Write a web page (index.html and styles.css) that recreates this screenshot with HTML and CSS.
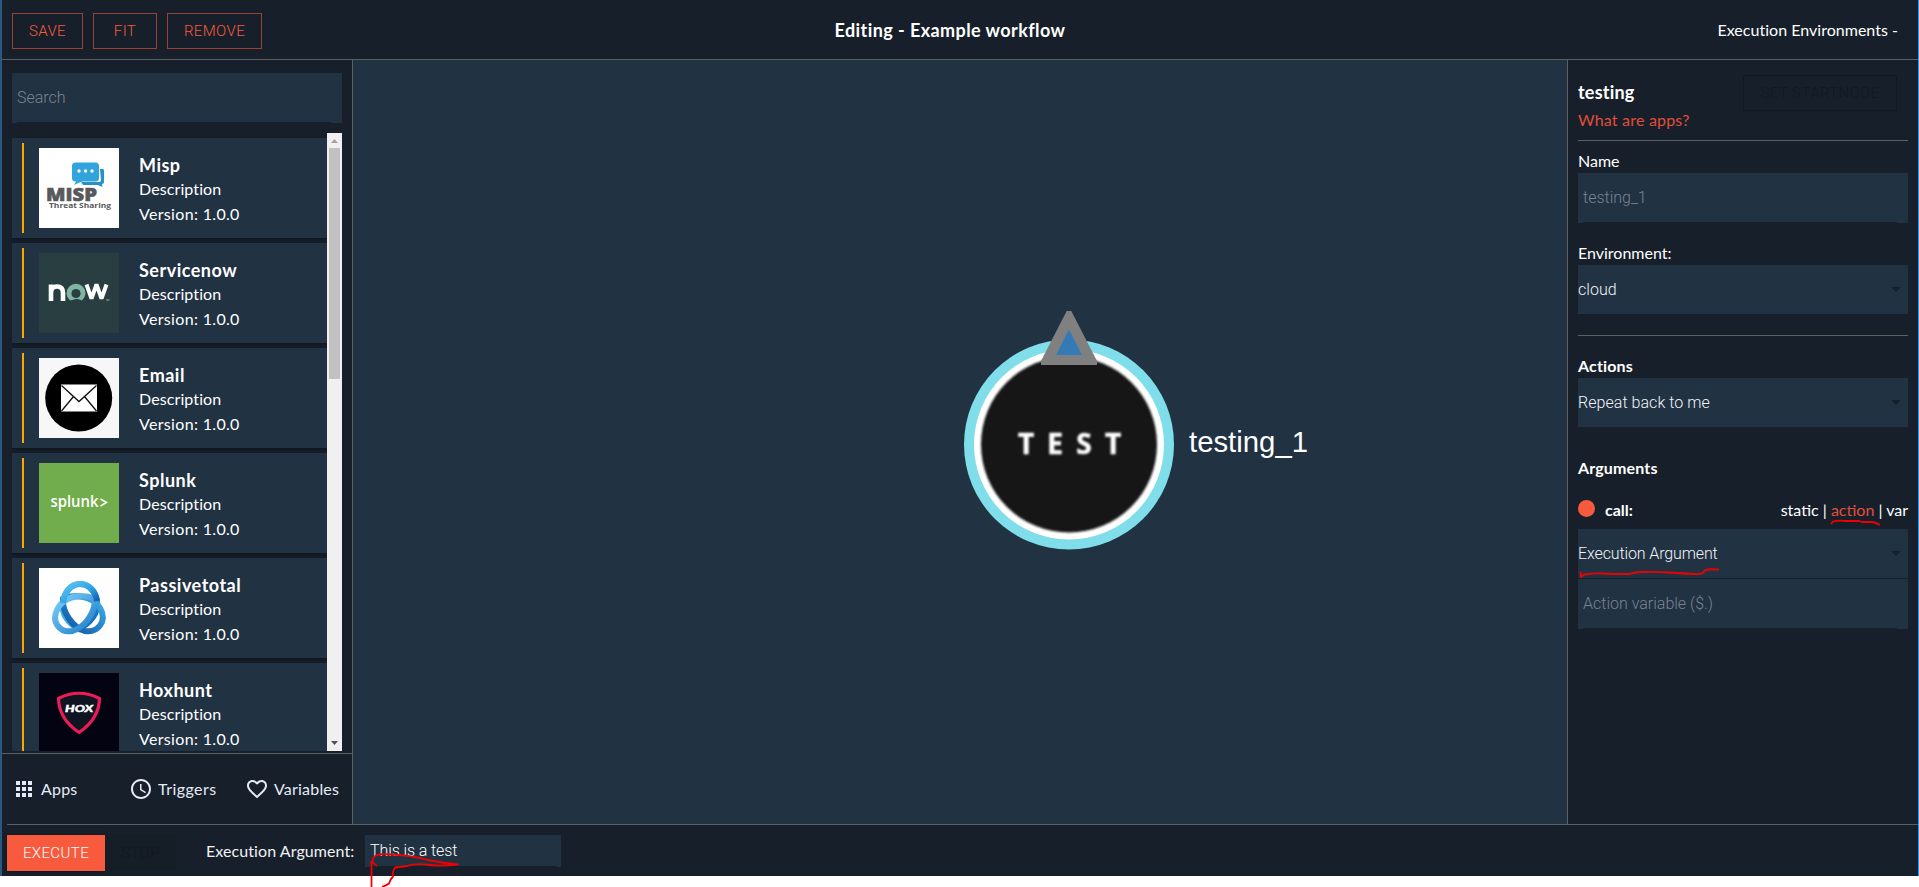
FILE: index.html
```html
<!DOCTYPE html>
<html lang="en">
<head>
<meta charset="utf-8">
<title>Editing - Example workflow</title>
<link rel="stylesheet" href="styles.css">
</head>
<body>
<div class="app">
  <header class="topbar">
    <div class="actions">
      <button class="btn w-save"><span>SAVE</span></button>
      <button class="btn w-fit"><span>FIT</span></button>
      <button class="btn w-remove"><span>REMOVE</span></button>
    </div>
    <h1 class="title">Editing - Example workflow</h1>
    <div class="environments">Execution Environments -</div>
  </header>

  <div class="workspace">
    <aside class="left">
      <div class="browser">
        <div class="field"><span class="placeholder">Search</span></div>
        <div class="scroller">
          <div class="list">
            <article class="card">
              <svg class="logo" viewBox="0 0 80 80"><rect width="80" height="80" fill="#fff"/>
                <path d="M61 21h3q1 0 1 2v11q0 2-2 2l.5 3-5-2H44l-2-3h18q2 0 2-2z" fill="#2a8fc4"/>
                <rect x="33" y="14.500" width="27" height="19" rx="3.500" fill="#31a3dd"/><path d="M38 32l-3 5 9-4z" fill="#31a3dd"/>
                <g fill="#fff"><circle cx="40" cy="23" r="1.700"/><circle cx="46.500" cy="23" r="1.700"/><circle cx="53" cy="23" r="1.700"/></g>
                <text x="7" y="52.500" class="logo-misp" textLength="51" lengthAdjust="spacingAndGlyphs">MISP</text>
                <text x="10" y="60" class="logo-sharing" textLength="62" lengthAdjust="spacingAndGlyphs">Threat Sharing</text>
              </svg>
              <div class="info"><h2>Misp</h2><p>Description</p><p class="version">Version: 1.0.0</p></div>
            </article>
            <article class="card">
              <svg class="logo" viewBox="0 0 80 80"><rect width="80" height="80" fill="#293e41"/>
                <g fill="none" stroke="#fff" stroke-width="4.600"><path d="M12 48V31.500M12 40q0-6.500 6-6.500t6 6.500v8"/><path d="M47.500 31.500l5 14 5-14 5 14 5-14" stroke-width="4" stroke-linejoin="bevel"/></g>
                <path d="M31 47.500a9.500 9.500 0 1 1 12 0q-3-2-6-1.500t-6 1.500z" fill="#81b5a1"/><circle cx="37" cy="40.500" r="4.600" fill="#293e41"/>
                <path d="M67 47h3.500" stroke="#9aa9a9"/>
              </svg>
              <div class="info"><h2>Servicenow</h2><p>Description</p><p class="version">Version: 1.0.0</p></div>
            </article>
            <article class="card">
              <svg class="logo" viewBox="0 0 80 80"><rect width="80" height="80" fill="#f7f7f7"/>
                <circle cx="39.700" cy="40" r="33.500" fill="#000"/><rect x="22" y="26.500" width="36" height="27" fill="#fff"/>
                <path d="M22.500 27.500L40 43.500l17.500-16M22.500 53l12-14.500M57.500 53l-12-14.500" fill="none" stroke="#111" stroke-width="1.300"/>
              </svg>
              <div class="info"><h2>Email</h2><p>Description</p><p class="version">Version: 1.0.0</p></div>
            </article>
            <article class="card">
              <svg class="logo" viewBox="0 0 80 80"><rect width="80" height="80" fill="#71ac4d"/>
                <text x="11.500" y="44" class="logo-splunk" textLength="48" lengthAdjust="spacingAndGlyphs">splunk</text>
                <path d="M61.500 36l6 3.500-6 3.500" fill="none" stroke="#fff" stroke-width="1.500"/>
              </svg>
              <div class="info"><h2>Splunk</h2><p>Description</p><p class="version">Version: 1.0.0</p></div>
            </article>
            <article class="card">
              <svg class="logo" viewBox="0 0 80 80">
                <defs>
                  <linearGradient id="pa" x1="0" y1="0" x2="1" y2="1"><stop offset="0" stop-color="#5fc4f3"/><stop offset=".5" stop-color="#2fa6e6"/><stop offset="1" stop-color="#0b56a8"/></linearGradient>
                  <linearGradient id="pb" x1="0" y1="0" x2="1" y2="1"><stop offset="0" stop-color="#7fd0fa"/><stop offset="1" stop-color="#1b7cc9"/></linearGradient>
                  <linearGradient id="pc" x1="1" y1="0" x2="0" y2="1"><stop offset="0" stop-color="#3fb4ec"/><stop offset="1" stop-color="#0c4f9e"/></linearGradient>
                </defs>
                <rect width="80" height="80" fill="#fff"/>
                <g fill="none" stroke-width="6">
                  <path d="M24 35C27 10 54 10 58 33C60 45 51 55 40 61C29 55 22 46 24 35z" stroke="url(#pa)"/>
                  <path d="M24 31C36 25 55 29 61 40C69 54 58 65 46 63C34 60 23 44 24 31z" stroke="url(#pc)"/>
                  <path d="M56 31C43 25 26 28 19 40C11 54 21 65 33 63C45 60 56 46 56 31z" stroke="url(#pb)"/>
                  <path d="M24 35C27 10 54 10 58 33" stroke="url(#pa)"/>
                </g>
              </svg>
              <div class="info"><h2>Passivetotal</h2><p>Description</p><p class="version">Version: 1.0.0</p></div>
            </article>
            <article class="card">
              <svg class="logo" viewBox="0 0 80 80"><rect width="80" height="80" fill="#030312"/>
                <path d="M19.500 25.500Q40 15 60.500 25.500Q60 46 40 59.500Q20 46 19.500 25.500z" fill="#0e1521" stroke="#ed1c58" stroke-width="3.200" stroke-linejoin="round"/>
                <text x="26" y="38.500" class="logo-hox" textLength="28" lengthAdjust="spacingAndGlyphs">HOX</text>
              </svg>
              <div class="info"><h2>Hoxhunt</h2><p>Description</p><p class="version">Version: 1.0.0</p></div>
            </article>
          </div>
          <div class="scrollbar">
            <svg width="15" height="15"><path d="M4 10h7L7.500 6z" fill="#a3a3a3"/></svg>
            <div class="thumb"></div>
            <svg width="15" height="15"><path d="M4 5h7L7.500 9z" fill="#505050"/></svg>
          </div>
        </div>
      </div>
      <nav class="tabs">
        <div class="tab t-apps"><svg width="24" height="24" viewBox="0 0 24 24"><path d="M4 8h4V4H4v4zm6 12h4v-4h-4v4zm-6 0h4v-4H4v4zm0-6h4v-4H4v4zm6 0h4v-4h-4v4zm6-10v4h4V4h-4zm-6 4h4V4h-4v4zm6 6h4v-4h-4v4zm0 6h4v-4h-4v4z"/></svg><span>Apps</span></div>
        <div class="tab t-triggers"><svg width="24" height="24" viewBox="0 0 24 24"><path d="M11.990 2C6.470 2 2 6.480 2 12s4.470 10 9.990 10C17.520 22 22 17.520 22 12S17.520 2 11.990 2zM12 20c-4.420 0-8-3.580-8-8s3.580-8 8-8 8 3.580 8 8-3.580 8-8 8zM12.500 7H11v6l5.250 3.150.75-1.230-4.500-2.670z"/></svg><span>Triggers</span></div>
        <div class="tab t-variables"><svg width="24" height="24" viewBox="0 0 24 24"><path d="M16.500 3c-1.740 0-3.410.81-4.500 2.090C10.910 3.810 9.240 3 7.500 3 4.420 3 2 5.420 2 8.500c0 3.780 3.400 6.860 8.550 11.540L12 21.350l1.450-1.320C18.600 15.360 22 12.280 22 8.500 22 5.420 19.580 3 16.500 3zm-4.400 15.550l-.1.100-.1-.1C7.140 14.240 4 11.390 4 8.500 4 6.500 5.500 5 7.500 5c1.540 0 3.040.99 3.570 2.360h1.870C13.460 5.990 14.960 5 16.500 5c2 0 3.500 1.500 3.500 3.500 0 2.890-3.140 5.740-7.900 10.050z"/></svg><span>Variables</span></div>
      </nav>
    </aside>

    <main class="canvas">
      <svg class="node" width="350" height="250" viewBox="960 300 350 250">
        <defs><filter id="soft"><feGaussianBlur stdDeviation=".8"/></filter></defs>
        <circle cx="1069" cy="444.500" r="105" fill="#80deea"/>
        <circle cx="1069" cy="444.500" r="95" fill="#fff"/>
        <circle cx="1069" cy="444.500" r="88" fill="#181914" filter="url(#soft)"/>
        <g class="node-test" filter="url(#soft)"><text x="1026" y="454">T</text><text x="1055" y="454">E</text><text x="1084" y="454">S</text><text x="1113" y="454">T</text></g>
        <path d="M1066.700 311h4.600L1097 361v4h-56v-4z" fill="#808080"/>
        <path d="M1069 329.500l13 25.500h-26z" fill="#337ab7"/>
        <text x="1189" y="452" class="node-label" textLength="119" lengthAdjust="spacingAndGlyphs">testing_1</text>
      </svg>
    </main>

    <aside class="right">
      <div class="node-head">
        <div><h2 class="node-name">testing</h2><a class="help">What are apps?</a></div>
        <button class="btn startnode"><span>SET STARTNODE</span></button>
      </div>
      <div class="label l-name">Name</div>
      <div class="field"><span class="placeholder">testing_1</span></div>
      <div class="label l-env">Environment:</div>
      <div class="select"><span>cloud</span><i class="caret"></i></div>
      <hr class="rule">
      <div class="label strong l-actions">Actions</div>
      <div class="select"><span>Repeat back to me</span><i class="caret"></i></div>
      <div class="label strong l-args">Arguments</div>
      <div class="arg"><i class="dot"></i><b class="call">call:</b><span class="modes">static | <em>action</em> | var</span></div>
      <div class="select"><span class="s-exec">Execution Argument</span><i class="caret"></i></div>
      <div class="field joined"><span class="placeholder">Action variable ($.)</span></div>
    </aside>
  </div>

  <footer class="bottombar">
    <button class="btn execute"><span>EXECUTE</span></button>
    <button class="btn stop"><span>STOP</span></button>
    <label class="exec-label">Execution Argument:</label>
    <div class="exec-input"><span>This is a test</span></div>
  </footer>
</div>
<svg class="marks" width="1919" height="887" viewBox="0 0 1919 887">
  <path d="M1831 524l2-2.500q6-1.500 13-.5h13l3 1h10q4 .5 8 3"/>
  <path d="M1580.500 571.500l.5 5.500 3-2.500q10-1.500 20-1t26 .5q5-2 10-2 15-.5 30 .5t24 1.500 10-2.500 12-2h3"/>
  <path d="M371.500 887v-26M377 866q-7-4-3-9 4-4 17-2.500 22 1 37 5.500 15 3 30 4.500-16 2-28 .5-14-2-23 1-8 1-12 1.500-3 4-2 9-3 3-4 7-3 2-7 3.500"/>
</svg>
</body>
</html>
```

FILE: styles.css
```css
* { box-sizing: border-box; }
html, body { height: 100%; overflow: hidden; }
body { margin: 0; background: #fff; color: #fff; font-family: Lato, sans-serif; font-size: 16px; }
h1, h2, p { margin: 0; }

.app { height: 876px; display: flex; flex-direction: column; background: #17202a; border-left: 2px solid #2a5880; border-right: 1px solid #2196f3; }

.topbar { height: 60px; flex: none; display: grid; grid-template-columns: 1fr auto 1fr; align-items: center; border-bottom: 1px solid #5b6163; padding: 3px 20px 0 10px; }
.actions { display: flex; gap: 10px; }
.title { font-size: 18px; font-weight: 700; letter-spacing: .42px; padding: 0 10px 2px 0; }
.environments { text-align: right; letter-spacing: .02px; padding-bottom: 3px; }

.btn { height: 36px; padding: 0; border: 1px solid #9a4136; background: none; color: #f85a3e; font: 300 15px Roboto, sans-serif; letter-spacing: .4px; }
.w-save { width: 71px; }
.w-fit { width: 64px; }
.w-remove { width: 95px; }

.workspace { height: 765px; flex: none; display: flex; }
.left { width: 351px; flex: none; display: flex; flex-direction: column; border-right: 1px solid #5b6163; }
.browser { height: 693px; display: flex; flex-direction: column; gap: 10px; padding: 13px 10px 2px; }
.field { height: 50px; flex: none; background: #213243; padding: 0 11px 0 5px; display: flex; }
.field .placeholder { flex: 1; height: 50px; border-bottom: 1px solid #17202a; }
.placeholder { color: #7a848e; font: 300 16px/50px Roboto, sans-serif; }

.scroller { height: 618px; display: flex; overflow: hidden; }
.list { flex: 1; padding-top: 5px; display: flex; flex-direction: column; gap: 5px; height: 618px; overflow: hidden; }
.card { flex: none; height: 100px; background: #213243; display: flex; padding: 5px 10px; box-shadow: 0 1px 3px rgba(0,0,0,.45); }
.card::before { content: ""; width: 2px; height: 90px; background: #ffa500; margin-right: 15px; }
.logo { width: 80px; height: 80px; margin-top: 5px; flex: none; }
.info { margin-left: 20px; padding-top: 11px; }
.info h2 { font-size: 18px; line-height: 23px; letter-spacing: .5px; }
.info p { line-height: 24px; letter-spacing: .1px; }
.info .version { padding-top: 1px; letter-spacing: .33px; }
.logo-misp { font: 800 18px "Open Sans", sans-serif; fill: #58595b; stroke: #58595b; stroke-width: .6px; }
.logo-sharing { font: 700 7px "Open Sans", sans-serif; fill: #58595b; }
.logo-splunk { font: 600 16px "Open Sans", sans-serif; fill: #fff; }
.logo-hox { font: italic 900 10px Lato, sans-serif; fill: #fff; stroke: #fff; stroke-width: .4px; }
.scrollbar { width: 15px; background: #f0f0f0; display: flex; flex-direction: column; align-items: center; }
.scrollbar svg { display: block; flex: none; }
.thumb { width: 11px; height: 231px; background: #c1c1c1; margin-bottom: auto; }

.tabs { flex: 1; border-top: 1px solid #5b6163; display: flex; padding: 23px 0 0 10px; color: #e6eaf8; }
.tab { display: flex; height: 24px; line-height: 24px; gap: 5px; letter-spacing: .2px; }
.tab svg { fill: #e6eaf8; flex: none; }
.t-apps { width: 117px; }
.t-triggers { width: 116px; letter-spacing: .45px; }

.canvas { flex: 1; background: #213243; display: flex; justify-content: flex-start; padding: 240px 0 0 607px; }
.node { width: 350px; height: 250px; flex: none; }
.node-label { font: 30px "Liberation Sans", Arial, sans-serif; fill: #fff; }
.node-test { font: 700 28px "Open Sans", sans-serif; fill: #fff; text-anchor: middle; stroke: #fff; stroke-width: .5px; }

.right { width: 351px; flex: none; border-left: 1px solid #5b6163; padding: 0 10px; }
.node-head { height: 81px; display: flex; justify-content: space-between; border-bottom: 1px solid #5b6163; padding: 15px 11px 0 0; }
.node-name { font-size: 18px; line-height: 34px; letter-spacing: .2px; }
.help { display: block; color: #e04e3a; line-height: 22px; letter-spacing: .2px; }
.startnode { width: 154px; border-color: #111820; color: #101820; }
.label { line-height: 20px; height: 22px; }
.strong { font-weight: 700; letter-spacing: .15px; }
.l-name { margin-top: 10px; }
.l-env { margin-top: 20px; }
.select { height: 49px; background: #213243; display: flex; align-items: center; justify-content: space-between; padding-right: 7px; font: 300 16px Roboto, sans-serif; color: #f2f5f8; letter-spacing: .05px; }
.s-exec { letter-spacing: -.12px; }
.caret { border: 5px solid transparent; border-top-color: #17202a; border-bottom: 0; }
.rule { border: 0; height: 1px; margin: 21px 0 0; background: #5b6163; }
.l-actions { margin-top: 20px; }
.l-args { margin-top: 31px; }
.arg { height: 49px; display: flex; align-items: flex-start; padding-top: 20px; line-height: 20px; }
.dot { width: 17px; height: 17px; border-radius: 50%; background: #f85a3e; margin-right: 10px; }
.modes { margin-left: auto; }
.modes em { font-style: normal; color: #e04e3a; }
.joined { margin-top: 1px; }

.bottombar { height: 51px; flex: none; margin-left: 5px; border-top: 1px solid #5b6163; display: flex; padding-top: 10px; margin-top: -1px; }
.execute { width: 98px; border: 0; background: #f85a3e; color: #fff; box-shadow: 0 1px 4px rgba(0,0,0,.4); }
.stop { width: 71px; border: 0; background: #151d26; color: #101820; }
.exec-label { margin-left: 30px; width: 159px; line-height: 32px; color: #f0f2f4; letter-spacing: .08px; }
.exec-input { width: 196px; height: 32px; background: #213243; padding: 0 4px 0 5px; font: 300 16px/31px Roboto, sans-serif; letter-spacing: -.1px; }
.exec-input span { display: block; height: 32px; border-bottom: 1px solid #17202a; }

.marks { position: absolute; left: 0; top: 0; pointer-events: none; fill: none; stroke: #f00000; stroke-width: 1.800; stroke-linejoin: round; }
```
